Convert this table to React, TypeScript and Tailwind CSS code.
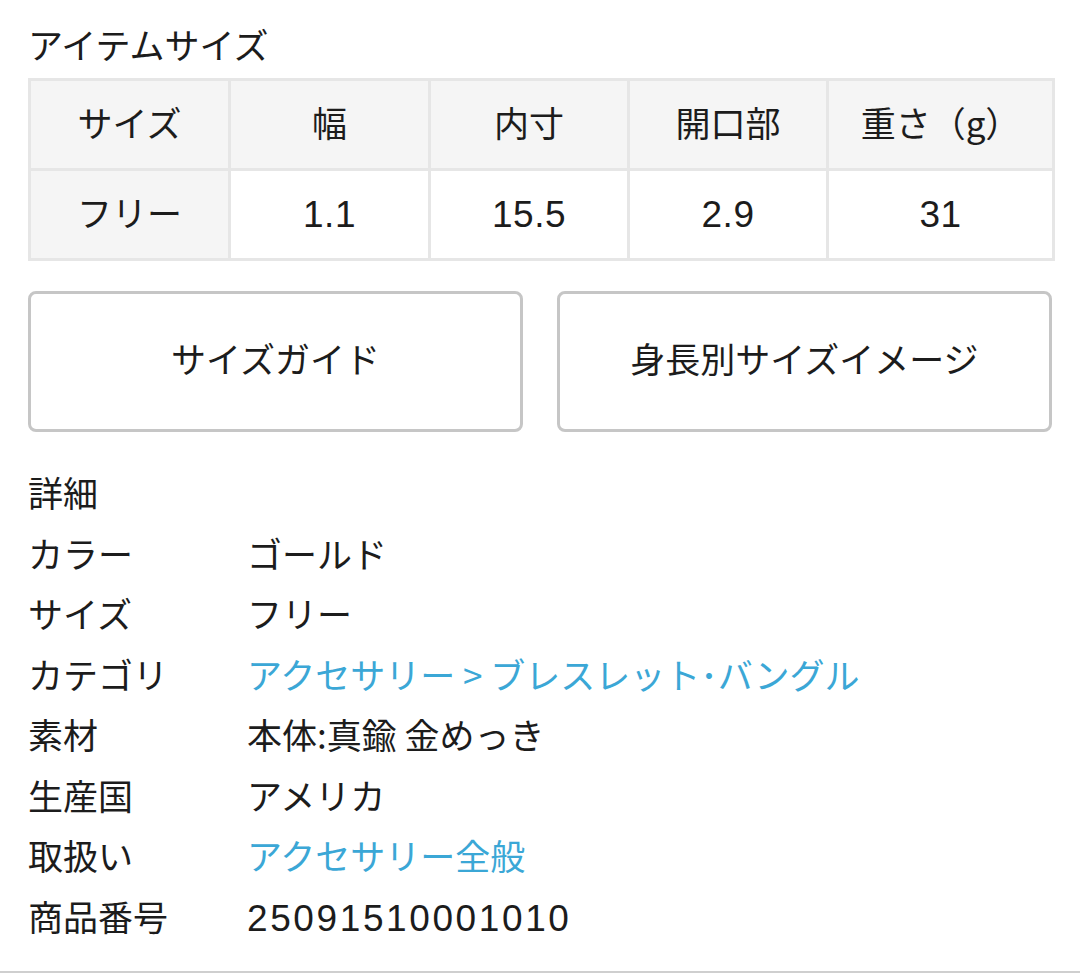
const sizeHead = ["サイズ", "幅", "内寸", "開口部", "重さ（g）"];
const sizeRow = ["フリー", "1.1", "15.5", "2.9", "31"];

const details: { label: string; value: string; link?: boolean; num?: boolean }[] = [
  { label: "カラー", value: "ゴールド" },
  { label: "サイズ", value: "フリー" },
  { label: "カテゴリ", value: "アクセサリー > ブレスレット･バングル", link: true },
  { label: "素材", value: "本体:真鍮 金めっき" },
  { label: "生産国", value: "アメリカ" },
  { label: "取扱い", value: "アクセサリー全般", link: true },
  { label: "商品番号", value: "25091510001010", num: true },
];

function Num({ children, wide }: { children: string; wide?: boolean }) {
  return (
    <span
      className={`text-[37px] leading-none ${wide ? "tracking-[2.6px]" : "tracking-[0.5px]"}`}
      style={{ fontFamily: '"Liberation Sans", Arial, sans-serif' }}
    >
      {children}
    </span>
  );
}

export default function App() {
  return (
    <div
      className="w-[1080px] h-[973px] overflow-hidden bg-white border-b-2 border-[#cfcfcf] px-[28px] text-[#1c1c1c] text-[35px]"
      style={{ fontFamily: '"Noto Sans CJK JP", "Noto Sans", sans-serif' }}
    >
      <h2 className="pt-[18px] leading-[51px] font-normal">アイテムサイズ</h2>

      <table className="mt-[9px] w-[1024px] table-fixed border-collapse border-[3px] border-[#e6e6e6]">
        <colgroup>
          <col className="w-[200px]" />
          <col className="w-[200px]" />
          <col className="w-[199px]" />
          <col className="w-[199px]" />
          <col className="w-[226px]" />
        </colgroup>
        <tbody>
          <tr className="h-[90px] bg-[#f5f5f5]">
            {sizeHead.map((h) => (
              <td key={h} className="border-[3px] border-[#e6e6e6] pb-[5px] text-center font-normal">
                {h}
              </td>
            ))}
          </tr>
          <tr className="h-[90px]">
            {sizeRow.map((v, i) => (
              <td
                key={i}
                className={`border-[3px] border-[#e6e6e6] text-center ${i === 0 ? "bg-[#f5f5f5] pb-[5px]" : "bg-white pb-[4px]"}`}
              >
                {i === 0 ? v : <Num>{v}</Num>}
              </td>
            ))}
          </tr>
        </tbody>
      </table>

      <div className="mt-[30px] flex gap-[34px]">
        <button className="flex-1 h-[141px] rounded-[8px] border-[3px] border-[#c6c6c6] bg-white pb-[7px]">
          サイズガイド
        </button>
        <button className="flex-1 h-[141px] rounded-[8px] border-[3px] border-[#c6c6c6] bg-white pb-[7px]">
          身長別サイズイメージ
        </button>
      </div>

      <div className="mt-[30px] leading-[60.5px]">
        <div>詳細</div>
        {details.map((d) => (
          <div key={d.label} className="flex items-baseline">
            <span className="w-[219px] shrink-0">{d.label}</span>
            {d.num ? (
              <Num wide>{d.value}</Num>
            ) : (
              <span className={d.link ? "text-[#3ba7d6]" : ""}>{d.value}</span>
            )}
          </div>
        ))}
      </div>
    </div>
  );
}
